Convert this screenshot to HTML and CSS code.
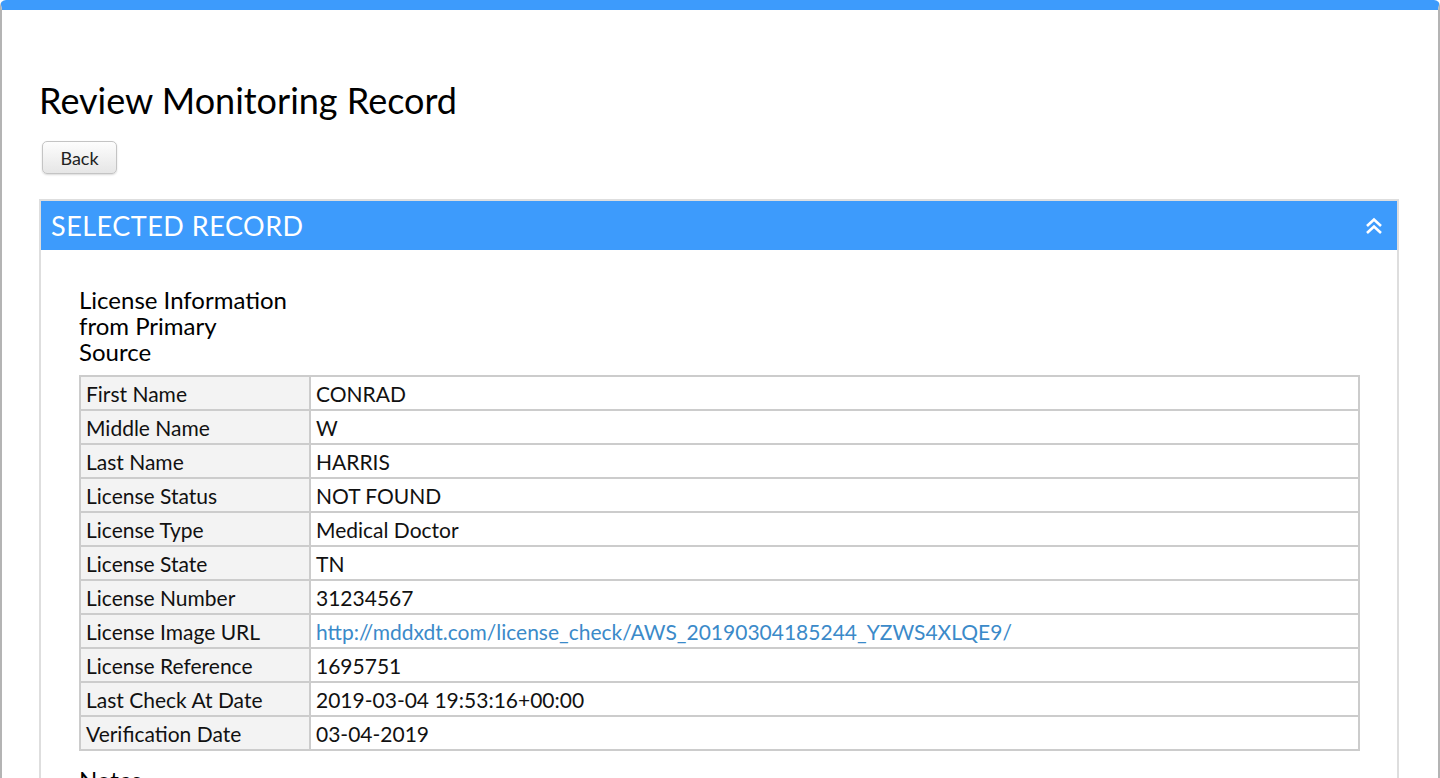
FILE: index.html
```html
<!DOCTYPE html>
<html lang="en">
<head>
  <meta charset="UTF-8" />
  <title>Review Monitoring Record</title>
  <link rel="stylesheet" href="styles.css">
</head>
<body>
  <div class="window">
    <h1>Review Monitoring Record</h1>
    <button class="back-btn">Back</button>

    <div class="panel">
      <div class="panel-head">
        <span>SELECTED RECORD</span>
        <svg class="collapse" width="18" height="18" viewBox="0 0 18 18">
          <path d="M2 9 L9 2.5 L16 9 M2 16 L9 9.5 L16 16" fill="none" stroke="#fff" stroke-width="2.6" />
        </svg>
      </div>
      <div class="panel-body">
        <h3>License Information from Primary Source</h3>
        <table class="info">
          <tr><th>First Name</th><td>CONRAD</td></tr>
          <tr><th>Middle Name</th><td>W</td></tr>
          <tr><th>Last Name</th><td>HARRIS</td></tr>
          <tr><th>License Status</th><td>NOT FOUND</td></tr>
          <tr><th>License Type</th><td>Medical Doctor</td></tr>
          <tr><th>License State</th><td>TN</td></tr>
          <tr><th>License Number</th><td>31234567</td></tr>
          <tr><th>License Image URL</th><td><a href="#">http://mddxdt.com/license_check/AWS_20190304185244_YZWS4XLQE9/</a></td></tr>
          <tr><th>License Reference</th><td>1695751</td></tr>
          <tr><th>Last Check At Date</th><td>2019-03-04 19:53:16+00:00</td></tr>
          <tr><th>Verification Date</th><td>03-04-2019</td></tr>
        </table>
        <h3 class="notes">Notes</h3>
      </div>
    </div>
  </div>
</body>
</html>
```

FILE: styles.css
```css
* {
  box-sizing: border-box;
}

html, body {
  margin: 0;
  padding: 0;
  background: #fff;
  overflow: hidden;
}

body {
  font-family: Lato, 'Noto Sans', sans-serif;
  color: #111;
}

.window {
  min-height: 778px;
  border-top: 10px solid #3d9bfc;
  border-left: 2px solid #b4b4b4;
  border-right: 2px solid #b4b4b4;
  border-radius: 6px 6px 0 0;
  padding: 0 39px 0 37px;
}

h1 {
  margin: 0;
  padding-top: 69px;
  font-size: 36px;
  font-weight: 400;
  line-height: 42px;
  color: #000;
}

.back-btn {
  margin: 20px 0 0 3px;
  width: 75px;
  height: 33px;
  font-family: inherit;
  font-size: 18px;
  color: #222;
  background: linear-gradient(#fdfdfd, #e6e6e6);
  border: 1px solid #c4c4c4;
  border-radius: 5px;
  box-shadow: 0 1px 2px rgba(0,0,0,0.15);
}

.panel {
  margin-top: 25px;
  border: 2px solid #dedede;
  border-bottom: none;
}

.panel-head {
  background: #3d9bfc;
  height: 49px;
  display: flex;
  align-items: center;
  justify-content: space-between;
  padding: 0 14px 0 10px;
  color: #fff;
  font-size: 27px;
  letter-spacing: 0.5px;
}

.panel-head .collapse {
  display: block;
}

.panel-body {
  padding: 37px 37px 0 38px;
}

.panel-body h3 {
  margin: 0 0 10px;
  width: 211px;
  font-size: 24px;
  font-weight: 400;
  line-height: 26px;
  color: #000;
}

.info {
  width: 100%;
  border-collapse: collapse;
  border: 2px solid #cccccc;
  font-size: 21px;
}

.info th,
.info td {
  border: 2px solid #cccccc;
  height: 34px;
  padding: 0 5px;
  text-align: left;
  font-weight: 400;
}

.info th {
  width: 230px;
  background: #f3f3f3;
}

.info a {
  color: #3b8ac9;
  text-decoration: none;
}

.panel-body h3.notes {
  margin-top: 16px;
}
```
